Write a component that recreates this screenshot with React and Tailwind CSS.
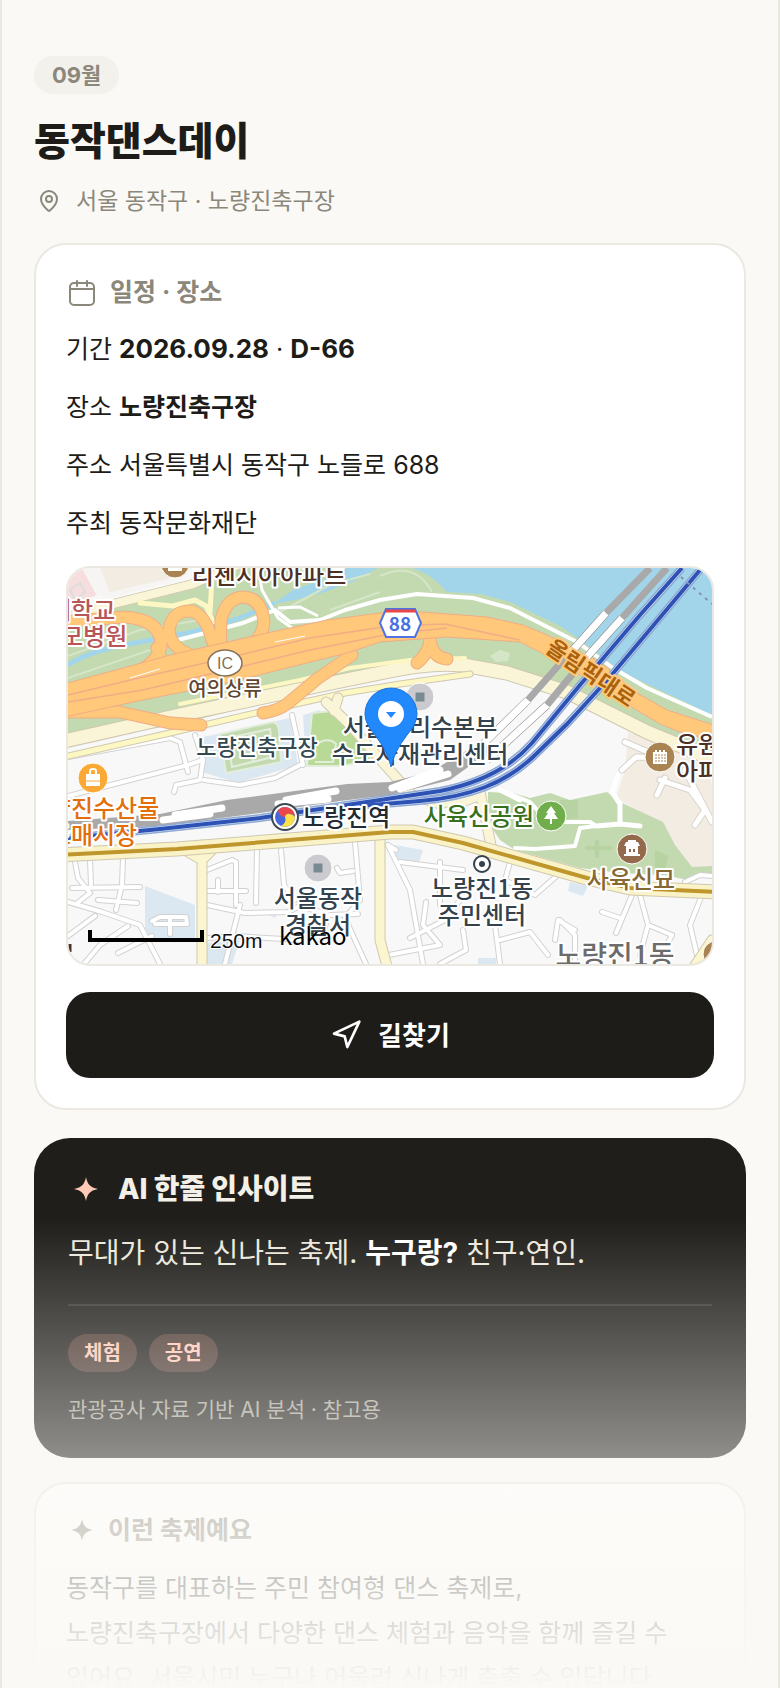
import React from "react";
import { MapPin, Navigation } from "lucide-react";

const SCHEDULE_ROWS = [
  { label: "장소", value: "노량진축구장", bold: true },
  { label: "주소", value: "서울특별시 동작구 노들로 688" },
  { label: "주최", value: "동작문화재단" },
];

const TAGS = ["체험", "공연"];

// Side streets on the map
const STREETS = [
  "M68 902 L102 912 L140 925 L160 964",
  "M75 862 L78 878 L90 893 L76 904",
  "M90 860 L91 885",
  "M123 858 L122 885 L116 910",
  "M72 888 L140 887",
  "M98 900 L137 903",
  "M68 936 L95 916",
  "M84 964 L100 945 L128 926",
  "M118 953 L152 936",
  "M207 870 L232 860 L236 862 L236 905",
  "M208 891 L246 891",
  "M218 880 V892",
  "M257 848 L256 903",
  "M207 905 L245 913 L288 912 L300 906",
  "M281 850 L284 885 L295 900",
  "M355 842 L360 900 L345 918",
  "M337 868 L340 873 L353 871",
  "M345 918 L366 964",
  "M208 938 L235 936 L300 940",
  "M240 905 L225 964",
  "M300 906 L330 915 L358 914",
  "M328 915 L322 938",
  "M388 845 L410 890 L423 964",
  "M388 845 L396 850",
  "M400 862 L463 870",
  "M440 862 V905",
  "M426 902 L423 925",
  "M510 862 L505 880 L535 895 L560 873",
  "M410 938 L445 920 L460 900",
  "M389 955 L440 945 L423 925",
  "M495 925 L500 964",
  "M500 940 L530 932 L548 955",
  "M463 930 L466 950 L440 964",
  "M560 920 L575 935 L575 964",
  "M555 940 L558 920 L575 930",
  "M632 895 L616 933",
  "M602 912 L620 918",
  "M640 895 L648 925 L672 935",
  "M648 925 L640 955",
  "M702 895 L690 925 L697 955",
  "M672 935 L660 958",
  "M685 882 L700 875 L712 876",
  "M68 796 L188 765 L203 760",
  "M174 792 L176 785 L200 780 L203 760 L195 735",
  "M204 780 L240 785 L275 778 L300 765",
  "M292 715 L303 765",
  "M68 757 L170 738 L180 742 L188 772",
];

const RAIL_MAIN =
  "M682 568 L640 615 L600 662 L580 685 L532 743 C510 768 480 783 440 791 C390 798 330 808 260 818 L160 829 L68 838";
const RAIL_SIDE =
  "M700 570 L647 633 L610 677 L567 724 L533 757 C505 783 470 797 420 801 L360 806";

function Sparkle({ size, className }) {
  return (
    <svg width={size} height={size} viewBox="0 0 24 24" className={className} aria-hidden="true">
      <path
        fill="currentColor"
        d="M12 4 C12.9 8.6 14.6 10.9 20 12 C14.6 13.1 12.9 15.4 12 20 C11.1 15.4 9.4 13.1 4 12 C9.4 10.9 11.1 8.6 12 4 Z"
      />
    </svg>
  );
}

function CalendarIcon() {
  return (
    <svg
      width="32"
      height="32"
      viewBox="0 0 32 32"
      fill="none"
      stroke="currentColor"
      strokeWidth="2"
      strokeLinecap="round"
      aria-hidden="true"
    >
      <rect x="4" y="6" width="24" height="22" rx="4" />
      <path d="M4 12 H28 M11 4 V9 M21 4 V9" />
    </svg>
  );
}

function MapLabel({ x, y, color, size = 24, anchor = "middle", weight = 500, children }) {
  return (
    <text
      x={x}
      y={y}
      fill={color}
      fontSize={size}
      fontWeight={weight}
      textAnchor={anchor}
      stroke="#fff"
      strokeWidth="4"
      strokeLinejoin="round"
      paintOrder="stroke"
    >
      {children}
    </text>
  );
}

function VenueMap() {
  return (
    <svg
      viewBox="68 568 644 396"
      preserveAspectRatio="xMidYMid slice"
      className="block h-full w-full font-['Noto_Sans_CJK_KR',sans-serif]"
      role="img"
      aria-label="노량진축구장 지도"
    >
      <rect x="68" y="568" width="644" height="396" fill="#f8f8f8" />

      {/* water and riverside */}
      <path d="M412 568 H712 V730 L560 650 L440 600 Z" fill="#a3d5ea" />
      <path
        d="M68 622 L110 606 L193 582 L228 568 H412 Q432 574 447 592 L480 594 L510 602 L560 626 L577 638 L622 672 L712 715 V752 L640 724 L560 690 L480 668 L400 664 L300 694 L180 724 L68 742 Z"
        fill="#c3dab0"
      />
      <path d="M273 604 L293 590 L327 578 L345 568 H378 L352 582 L325 592 L295 600 Z" fill="#a3d5ea" />
      <path d="M68 665 Q90 650 140 642 Q200 632 240 618 L275 603" stroke="#a3d5ea" strokeWidth="5" fill="none" />
      <g stroke="#d5e5c8" strokeWidth="2" fill="none">
        <path d="M68 656 L140 630 L200 620" />
        <path d="M68 678 L150 650" />
        <path d="M280 612 L330 585 L370 574" />
        <path d="M380 576 Q415 560 432 592" />
        <path d="M330 610 L380 592" />
      </g>
      <path d="M490 656 L500 650 L510 653 L508 661 L496 662 Z" fill="#d5e5c8" />
      <path d="M68 575 L82 568 L97 595 L68 608 Z" fill="#f6dede" />
      <path d="M68 568 H180 L185 578 L110 598 L96 594 L82 568 Z" fill="#f7f5f3" />
      <path d="M100 568 H165 L180 576 L110 592 Z" fill="#f2ece2" />
      <path d="M70 590 L80 583 L85 592 L75 600 Z" fill="none" stroke="#ddd" strokeWidth="2" />

      {/* facilities */}
      <g fill="#dce8f1">
        <path d="M198 738 L290 718 L298 765 L238 783 L202 772 Z" />
        <path d="M303 715 L320 710 L320 765 L306 762 Z" />
        <path d="M145 886 L195 905 V940 H145 Z" />
        <path d="M206 943 L240 940 L232 964 H206 Z" />
        <path d="M395 845 L423 850 L418 866 L396 860 Z" />
        <path d="M570 882 L588 886 L583 896 L568 891 Z" />
        <path d="M478 958 H496 V964 H478 Z" />
        <path d="M265 914 L276 911 V918 Z" />
      </g>
      <g fill="#c3dab0" stroke="#e2eedb" strokeWidth="2">
        <path d="M220 734 L273 722 Q278 723 279 730 L281 762 L226 773 Z" />
        <path d="M228 738 L270 729 L273 757 L232 767 Z" fill="none" />
        <path d="M249 733 L253 762" fill="none" />
        <path d="M312 713 L332 711 L350 728 L372 760 L342 766 L307 766 Z" fill="#b8da96" />
        <path d="M315 745 Q328 736 336 744 L333 762 L315 762" fill="none" />
      </g>

      {/* apartment blocks and park on the east side */}
      <path d="M628 732 L680 748 L712 770 V868 L690 870 L663 825 L616 798 L625 770 Z" fill="#f2ece2" />
      <path
        d="M488 792 L513 793 L530 798 L550 793 L570 800 L607 792 L622 803 L663 822 L675 845 L692 867 L712 866 V873 L687 880 L665 875 L620 873 L580 868 L515 850 L500 840 L488 822 Z"
        fill="#c3dab0"
      />
      <path d="M560 800 H578 V818 L560 820 Z M655 850 L668 856 L664 875 H655 Z" fill="#b7d3a2" />
      <path d="M585 848 H612 M597 840 V858" stroke="#b7d3a2" strokeWidth="4" />

      {/* side streets */}
      <g fill="none" strokeLinejoin="round" strokeLinecap="round">
        {STREETS.map((d) => (
          <path key={d} d={d} stroke="#d2d2d2" strokeWidth="6" />
        ))}
        {STREETS.map((d) => (
          <path key={`${d}-fill`} d={d} stroke="#fff" strokeWidth="4" />
        ))}
        <path d="M152 921 L160 917 H186 L187 924 H155 M170 918 V934" stroke="#d2d2d2" strokeWidth="6" />
        <path d="M152 921 L160 917 H186 L187 924 H155 M170 918 V934" stroke="#fff" strokeWidth="4" />
        <path d="M500 790 L530 802 L548 822 L590 822 L596 826 L580 828 L575 846 L535 849 L515 848" stroke="#fff" strokeWidth="4" />
        <path d="M632 760 L618 775 L612 792 L620 804 L620 824 L640 826 M620 824 L596 826" stroke="#fff" strokeWidth="5" />
        <path d="M625 742 L648 752 M622 770 L636 757 L660 758 M660 780 L690 790 L705 810 L695 825 M665 778 L657 795 M685 770 L712 822" stroke="#d8d4cc" strokeWidth="7" />
        <path d="M625 742 L648 752 M622 770 L636 757 L660 758 M660 780 L690 790 L705 810 L695 825 M665 778 L657 795 M685 770 L712 822" stroke="#fff" strokeWidth="5" />
        <path d="M500 790 L520 800" stroke="#fff" strokeWidth="5" />
      </g>

      {/* riverside walk */}
      <g fill="none" stroke="#fff" strokeWidth="4" strokeLinejoin="round">
        <path d="M178 640 L243 623 L275 610 L290 622 L320 620 L345 610 L380 600 L417 594 L473 598 L510 608 L577 642 L613 668 L647 688 L712 717" />
        <path d="M258 568 L262 590 L278 618 L292 628 M278 608 L300 607 L318 616" strokeWidth="3" />
      </g>

      {/* secondary roads */}
      <g fill="none" strokeLinejoin="round" strokeLinecap="round">
        <path d="M68 617 L113 604 L193 584 L240 564" stroke="#cfc8b0" strokeWidth="10" />
        <path d="M68 617 L113 604 L193 584 L240 564" stroke="#fbf5d8" strokeWidth="8" />
        <path d="M140 603 L173 606 L195 600 L206 606 L213 622 M212 578 L210 612" stroke="#fdf7c4" strokeWidth="5" />
        <path
          d="M60 742 L193 712 L307 688 L390 671 Q430 662 463 665 L507 673 L567 692 L647 732 L720 762"
          stroke="#cfc8b0"
          strokeWidth="15"
        />
        <path
          d="M60 742 L193 712 L307 688 L390 671 Q430 662 463 665 L507 673 L567 692 L647 732 L720 762"
          stroke="#fbf5d8"
          strokeWidth="13"
        />
        <path d="M60 758 L170 733 L260 712 L345 693 L400 684 L470 674" stroke="#cfc8b0" strokeWidth="7" />
        <path d="M60 758 L170 733 L260 712 L345 693 L400 684 L470 674" stroke="#fdf7c4" strokeWidth="5" />
        <path d="M180 704 L300 680 L350 668 L410 660 L465 658" stroke="#fdf7c4" strokeWidth="4" />
        <path
          d="M326 702 L350 725 L385 765 L412 795 M338 698 L334 711 M412 795 L440 804 L480 792 L492 850 M455 805 L480 795"
          stroke="#cfc8b0"
          strokeWidth="11"
        />
        <path
          d="M326 702 L350 725 L385 765 L412 795 M338 698 L334 711 M412 795 L440 804 L480 792 L492 850 M455 805 L480 795"
          stroke="#fbf5d8"
          strokeWidth="9"
        />
        <path d="M202 845 V970 M380 835 V940 L388 970 M188 852 L202 860 L212 850 M712 940 L692 970" stroke="#cfc8b0" strokeWidth="11" />
        <path d="M202 845 V970 M380 835 V940 L388 970 M188 852 L202 860 L212 850 M712 940 L692 970" stroke="#fbf5d0" strokeWidth="9" />
      </g>

      {/* expressway and ramps */}
      <g fill="none" strokeLinecap="round" strokeLinejoin="round">
        {["#f0ac85", "#ffc87b"].map((color, i) => (
          <g key={color} stroke={color} strokeWidth={i === 0 ? 13 : 11}>
            <path d="M60 622 L125 617 Q162 620 161 645 Q160 660 135 674" />
            <path d="M166 676 Q160 655 157 648" />
            <path d="M198 657 Q170 650 169 630 Q172 610 192 611 Q206 616 212 640 L222 662" />
            <path d="M220 655 L221 620 Q226 598 243 597 Q262 598 264 622 Q262 645 235 652" />
            <path d="M352 655 L317 679 L287 704 Q277 711 263 713" />
            <path d="M60 712 L120 712 L170 723 L201 725" />
            <path d="M430 638 Q430 652 417 663 M430 638 Q432 658 447 659" />
          </g>
        ))}
      </g>
      <path
        d="M60 685 L127 667 L170 655 L267 633 L327 620 L380 613 L423 612 L487 617 L523 625 L547 635 L600 662 L637 693 L667 710 L720 727 V742 L680 732 L660 724 L620 700 L580 675 L540 652 L520 642 L447 637 L380 642 L347 653 L227 683 L143 700 L60 718 Z"
        fill="#ffc87b"
        stroke="#f0ac85"
        strokeWidth="1"
      />
      <g fill="none" stroke="#f1ad86" strokeWidth="1.5">
        <path d="M68 695 L143 677 L227 658 L310 638 L390 626 L445 624 L520 640" />
        <path d="M68 702 L143 690 L227 670 L310 650 L390 634 L447 628" />
      </g>
      <path d="M130 678 L160 669 M275 642 L305 636" stroke="#fff" strokeWidth="1" />

      {/* railway yard */}
      <path
        d="M68 821 L160 814 L227 800 L347 784 L390 782 L430 772 L485 740 L495 748 L450 780 L390 795 L340 801 L260 813 L160 826 L68 830 Z"
        fill="#a9a9a9"
      />
      <g fill="none" stroke="#fff" strokeWidth="7" strokeLinecap="round">
        <path d="M163 820 L210 814 M175 815 L222 808" />
        <path d="M286 800 L336 791 M278 804 L328 799" />
        <path d="M392 788 L440 770 M400 789 L448 774" />
      </g>
      <g fill="none" stroke="#8f8f8f" strokeWidth="8">
        <path d="M528 700 L477 750 M547 705 L487 760" />
        <path d="M606 613 L573 650 M622 618 L587 657" />
      </g>
      <g fill="none" stroke="#fff" strokeWidth="7" strokeLinecap="round">
        <path d="M528 700 L477 750 M547 705 L487 760" />
        <path d="M606 613 L573 650 M622 618 L587 657" />
      </g>
      <g fill="none" stroke="#a9a9a9" strokeWidth="7">
        <path d="M650 568 L606 613 M667 568 L622 618" />
        <path d="M565 658 L528 700 M580 665 L547 705" />
      </g>
      <g fill="none">
        <path d={RAIL_MAIN} stroke="#8ea9d4" strokeWidth="8" />
        <path d={RAIL_SIDE} stroke="#8ea9d4" strokeWidth="8" />
        <path d={RAIL_MAIN} stroke="#dfe8f5" strokeWidth="5" />
        <path d={RAIL_SIDE} stroke="#dfe8f5" strokeWidth="5" />
        <path d={RAIL_MAIN} stroke="#2d52b6" strokeWidth="4" />
        <path d={RAIL_SIDE} stroke="#2d52b6" strokeWidth="4" />
      </g>
      <path d="M681 577 L712 604" stroke="#7d94b5" strokeWidth="2" strokeDasharray="3 5" />

      {/* trunk road */}
      <g fill="none" strokeLinejoin="round">
        <path d="M60 855 L177 849 L390 832 L413 832 L463 843 L587 878 L630 888 L720 892" stroke="#cfc8b0" strokeWidth="15" />
        <path d="M60 855 L177 849 L390 832 L413 832 L463 843 L587 878 L630 888 L720 892" stroke="#fbf3c8" strokeWidth="13" />
        <path d="M60 855 L177 849 L390 832 L413 832 L463 843 L587 878 L630 888 L720 892" stroke="#be962c" strokeWidth="4" />
      </g>

      {/* markers */}
      <g stroke="#fff" strokeWidth="1">
        <circle cx="175" cy="564" r="14" fill="#a98352" />
        <circle cx="93" cy="778" r="15" fill="#fba834" />
        <circle cx="551" cy="816" r="15" fill="#70ae4b" />
        <circle cx="660" cy="757" r="15" fill="#a98352" />
        <circle cx="632" cy="849" r="15" fill="#946a4c" />
        <circle cx="716" cy="954" r="13" fill="#a98352" />
        <circle cx="420" cy="697" r="14" fill="#cacacf" />
        <circle cx="318" cy="868" r="14" fill="#cacacf" />
      </g>
      <path d="M168 568 H182 V571 H168 Z" fill="#fff" />
      <rect x="415.500" y="692.500" width="9" height="9" fill="#798b92" />
      <rect x="313.500" y="863.500" width="9" height="9" fill="#798b92" />
      <path d="M86 774 H100 V786 H86 Z" fill="#fff" />
      <path d="M90 774 V771 Q90 769 93 769 Q96 769 96 771 V774" fill="none" stroke="#fff" strokeWidth="2" />
      <path d="M86 781 H100" stroke="#fba834" />
      <path d="M551 806 L556 813 H554 L558 819 H552 V824 H550 V819 H544 L548 813 H546 Z" fill="#fff" />
      <path d="M653 752 H655 V750 H657 V752 H659 V750 H661 V752 H663 V750 H665 V752 H667 V764 H653 Z" fill="#fff" />
      <path d="M655 755 H666 M655 758 H666 M655 761 H666" stroke="#a98352" strokeDasharray="2 1" />
      <path d="M624 846 L626 842 H638 L640 846 H638 V854 H640 V856 H624 V854 H626 V846 Z M628 840 H636 V842 H628 Z" fill="#fff" />
      <path d="M630 849 V852 M634 849 V852" stroke="#946a4c" strokeWidth="2" />
      <circle cx="482" cy="864" r="8" fill="#fff" stroke="#33424c" strokeWidth="2" />
      <circle cx="482" cy="864" r="3" fill="#33424c" />
      <circle cx="285" cy="817" r="13" fill="#fff" stroke="#3c4a50" strokeWidth="2" />
      <circle cx="285" cy="817" r="10" fill="#4668dc" />
      <path d="M285 817 Q279 817 278 810 A10 10 0 0 1 295 816 Q291 813 288 814 Q286 815 285 817 Z" fill="#e9474c" />
      <path d="M285 817 Q286 813 290 814 Q294 815 295 817 A10 10 0 0 1 281 826 Q287 823 285 817 Z" fill="#fbe04a" />

      <ellipse cx="225" cy="663" rx="17" ry="13" fill="#fff" stroke="#857059" strokeWidth="1.500" />
      <text x="225" y="669" fontSize="16" fill="#857059" textAnchor="middle" className="font-['Liberation_Sans',sans-serif]">
        IC
      </text>
      <path d="M386 609 H415 L421 623 L415 637 H386 L380 623 Z" fill="#fff" stroke="#4f73e4" strokeWidth="2" />
      <path d="M386 609.500 H415 L416 612.500 H385 Z" fill="#ea4848" />
      <text x="400" y="631" fontSize="19" fontWeight="700" fill="#4a70e2" textAnchor="middle">
        88
      </text>

      {/* labels */}
      <MapLabel x={269} y={584} color="#4c3024">리첸시아아파트</MapLabel>
      <MapLabel x={49} y={619} color="#b85557">가톨릭대학교</MapLabel>
      <MapLabel x={50} y={645} color="#b85557">여의도성모병원</MapLabel>
      <MapLabel x={225} y={696} size={20} color="#5f4732">여의상류</MapLabel>
      <MapLabel x={257} y={755} size={22} color="#33484f">노량진축구장</MapLabel>
      <MapLabel x={420} y={736} color="#33424c">서울아리수본부</MapLabel>
      <MapLabel x={420} y={763} color="#33424c">수도자재관리센터</MapLabel>
      <MapLabel x={93} y={817} color="#e26f0c">노량진수산물</MapLabel>
      <MapLabel x={93} y={844} color="#e26f0c">도매시장</MapLabel>
      <MapLabel x={302} y={826} anchor="start" color="#222b33">노량진역</MapLabel>
      <MapLabel x={479} y={825} color="#39701d">사육신공원</MapLabel>
      <MapLabel x={631} y={888} color="#866833">사육신묘</MapLabel>
      <MapLabel x={676} y={753} anchor="start" color="#4c3024">유원</MapLabel>
      <MapLabel x={676} y={780} anchor="start" color="#4c3024">아파트</MapLabel>
      <MapLabel x={318} y={907} color="#33424c">서울동작</MapLabel>
      <MapLabel x={318} y={934} color="#33424c">경찰서</MapLabel>
      <MapLabel x={482} y={897} color="#33424c">노량진1동</MapLabel>
      <MapLabel x={482} y={924} color="#33424c">주민센터</MapLabel>
      <MapLabel x={615} y={966} size={28} color="#6c6c6c">노량진1동</MapLabel>
      <text
        x="591"
        y="681"
        fontSize="22"
        fontWeight="700"
        fill="#aa620e"
        stroke="#ffc87b"
        strokeWidth="4"
        paintOrder="stroke"
        textAnchor="middle"
        transform="rotate(34 591 673)"
      >
        올림픽대로
      </text>

      {/* venue pin */}
      <path
        d="M391 767 Q388 752 375 735 Q365 724 365 714 A26 26 0 0 1 417 714 Q417 724 407 735 Q394 752 391 767 Z"
        fill="#2189fb"
        stroke="#1873dc"
        strokeWidth="1"
      />
      <circle cx="391" cy="714" r="13" fill="#fff" />
      <path d="M386 712 H396 L391 718 Z" fill="#2189fb" />

      {/* scale and provider */}
      <path d="M90 930 V940 H202 V930" fill="none" stroke="#000" strokeWidth="4" />
      <text x="210" y="948" fontSize="21" fill="#111" stroke="#fff" strokeWidth="2" paintOrder="stroke" className="font-['Liberation_Sans',sans-serif]">
        250m
      </text>
      <text x="279" y="945" fontSize="24" fill="#000">
        kakao
      </text>
      <path d="M70 944 V952" stroke="#4c3024" strokeWidth="3" />
    </svg>
  );
}

const App = () => {
  return (
    <div className="relative h-screen overflow-hidden border-x-2 border-[#eae8e1] bg-[#faf9f5] px-8 pt-14 font-['Inter','Noto_Sans_CJK_KR',sans-serif] text-[25px] text-[#1d1c18]">
      {/* Festival title */}
      <header className="flex flex-col items-start">
        <span className="flex h-[38px] items-center rounded-full bg-[#f2f1ec] px-[18px] text-[22px] font-bold text-[#8b877b]">
          09월
        </span>
        <h1 className="mt-[21px] text-[39px] leading-[52px] font-extrabold">동작댄스데이</h1>
        <p className="mt-4 flex items-center gap-[15px] px-[3px] text-[23px] leading-9 text-[#8b877b]">
          <MapPin size={24} strokeWidth={2} />
          서울 동작구 · 노량진축구장
        </p>
      </header>

      <main>
        {/* Schedule and place */}
        <section className="mt-6 rounded-[32px] border-2 border-[#eae8e1] bg-white p-[30px]">
          <h2 className="flex items-center gap-3 leading-[35px] font-bold text-[#8b877b]">
            <CalendarIcon />
            일정 · 장소
          </h2>
          <div className="mt-4 flex flex-col gap-[13px] leading-[45px]">
            <p>
              기간 <b className="text-[26px]">2026.09.28</b> · <b className="text-[26px]">D-66</b>
            </p>
            {SCHEDULE_ROWS.map((row) => (
              <p key={row.label}>
                {row.label} {row.bold ? <b>{row.value}</b> : row.value}
              </p>
            ))}
          </div>
          <div className="mt-5 h-[400px] overflow-hidden rounded-3xl border-2 border-[#eae8e1]">
            <VenueMap />
          </div>
          <button
            type="button"
            className="mt-[26px] flex h-[86px] w-full items-center justify-center gap-4 rounded-3xl bg-[#1d1c18] text-[26px] font-bold text-white"
          >
            <Navigation size={32} strokeWidth={2} />
            길찾기
          </button>
        </section>

        {/* AI insight */}
        <section className="mt-7 rounded-[36px] bg-[#1f1e1b] px-[34px] pt-8 pb-8">
          <h2 className="flex items-center gap-[14px] text-[28px] leading-[38px] font-extrabold text-[#f3f0e8]">
            <Sparkle size={36} className="text-[#ffc9b8]" />
            AI 한줄 인사이트
          </h2>
          <p className="mt-5 text-[28px] leading-[50px] text-[#ece8dc]">
            무대가 있는 신나는 축제. <b className="text-white">누구랑?</b> 친구·연인.
          </p>
          <div className="mt-[26px] flex gap-3 border-t-2 border-white/10 pt-7">
            {TAGS.map((tag) => (
              <span
                key={tag}
                className="flex h-[38px] items-center rounded-full bg-[#ff9b85]/20 px-4 text-xl font-bold text-[#ffc9b8]"
              >
                {tag}
              </span>
            ))}
          </div>
          <p className="mt-[22px] text-[21px] leading-8 text-[#a5a196]">관광공사 자료 기반 AI 분석 · 참고용</p>
        </section>

        {/* About */}
        <section className="mt-6 rounded-[32px] border-2 border-[#eae8e1] bg-white p-[30px]">
          <h2 className="flex items-center gap-[10px] leading-8 font-bold text-[#8b877b]">
            <Sparkle size={32} />
            이런 축제예요
          </h2>
          <p className="mt-5 leading-[45px]">
            동작구를 대표하는 주민 참여형 댄스 축제로,
            <br />
            노량진축구장에서 다양한 댄스 체험과 음악을 함께 즐길 수
            <br />
            있어요. 서울시민 누구나 어울려 신나게 춤출 수 있답니다.
          </p>
        </section>
      </main>

      {/* Fades the page out towards the bottom */}
      <div className="pointer-events-none absolute inset-x-0 bottom-0 h-[470px] bg-linear-to-b from-[#faf9f5]/0 to-[#faf9f5]" />
    </div>
  );
};

export default App;
